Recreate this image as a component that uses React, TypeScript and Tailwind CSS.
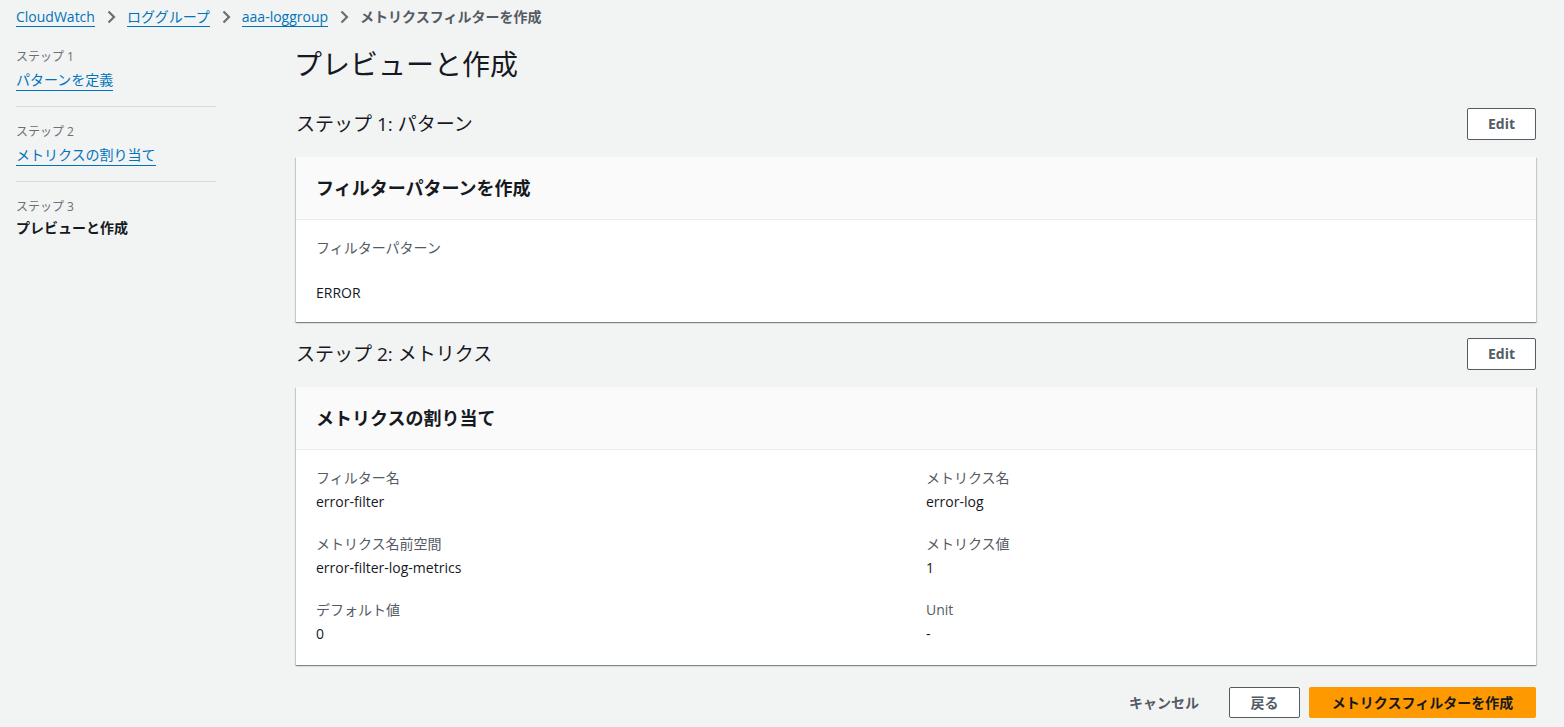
import React from 'react';

const font = 'font-["Open_Sans","Noto_Sans_CJK_JP",sans-serif]';

const Chevron = () => (
  <svg width="16" height="16" viewBox="0 0 16 16" className="mx-2 text-[#687078]">
    <path d="M5.5 2.5 L11 8 L5.5 13.5" fill="none" stroke="currentColor" strokeWidth="2.2" />
  </svg>
);

const Panel: React.FC<{ title: string; children: React.ReactNode }> = ({ title, children }) => (
  <div className="bg-white shadow-[0_1px_1px_0_rgba(0,28,36,0.3),1px_1px_1px_0_rgba(0,28,36,0.15),-1px_1px_1px_0_rgba(0,28,36,0.15)]">
    <div className="h-[63px] bg-[#fafafa] border-b border-[#eaeded] px-5 flex items-center">
      <h2 className="text-lg font-bold text-[#16191f]">{title}</h2>
    </div>
    {children}
  </div>
);

const SectionHead: React.FC<{ title: string }> = ({ title }) => (
  <div className="flex items-center justify-between h-[32px]">
    <h3 className="text-[19px] text-[#16191f]">{title}</h3>
    <button className="w-[69px] h-[32px] border border-[#545b64] rounded-[2px] bg-white text-sm font-bold text-[#545b64]">
      Edit
    </button>
  </div>
);

const Field: React.FC<{ label: string; value: string }> = ({ label, value }) => (
  <div className="h-[66px]">
    <div className="text-sm text-[#545b64] leading-[22px]">{label}</div>
    <div className="text-sm text-[#16191f] leading-[22px] mt-[2px]">{value}</div>
  </div>
);

export default function App() {
  const steps = [
    { n: 'ステップ 1', label: 'パターンを定義', link: true },
    { n: 'ステップ 2', label: 'メトリクスの割り当て', link: true },
    { n: 'ステップ 3', label: 'プレビューと作成', link: false },
  ];

  return (
    <div className={`${font} min-h-[727px] bg-[#f2f3f3] text-[#16191f]`}>
      {/* breadcrumbs */}
      <nav className="flex items-center h-[34px] px-4 text-sm">
        <a className="text-[#0073bb] border-b border-[#0073bb] leading-[18px]">CloudWatch</a>
        <Chevron />
        <a className="text-[#0073bb] border-b border-[#0073bb] leading-[18px]">ロググループ</a>
        <Chevron />
        <a className="text-[#0073bb] border-b border-[#0073bb] leading-[18px]">aaa-loggroup</a>
        <Chevron />
        <span className="text-[#545b64] font-semibold">メトリクスフィルターを作成</span>
      </nav>

      <div className="flex">
        {/* sidebar */}
        <aside className="w-[200px] ml-4 mt-[13px]">
          {steps.map((s, i) => (
            <div key={s.n} className={i < 2 ? 'border-b border-[#d5dbdb] pb-[15px] mb-[15px]' : ''}>
              <div className="text-xs text-[#687078] leading-5">{s.n}</div>
              {s.link ? (
                <a className="inline-block text-sm text-[#0073bb] border-b border-[#0073bb] leading-[20px] mt-[2px]">{s.label}</a>
              ) : (
                <div className="text-sm font-bold leading-[20px] mt-[1px]">{s.label}</div>
              )}
            </div>
          ))}
        </aside>

        {/* main */}
        <main className="ml-[80px] w-[1240px]">
          <h1 className="text-[28px] leading-[40px] mt-[10px] mb-[24px] -ml-[2px]">プレビューと作成</h1>

          <SectionHead title="ステップ 1: パターン" />
          <div className="mt-[17px]">
            <Panel title="フィルターパターンを作成">
              <div className="px-5 pt-[17px] pb-[18px]">
                <div className="text-sm text-[#545b64] leading-[22px]">フィルターパターン</div>
                <div className="text-sm leading-[22px] mt-[23px]">ERROR</div>
              </div>
            </Panel>
          </div>

          <div className="mt-[16px]">
            <SectionHead title="ステップ 2: メトリクス" />
          </div>
          <div className="mt-[17px]">
            <Panel title="メトリクスの割り当て">
              <div className="px-5 pt-[17px] grid grid-cols-2 gap-x-5">
                <div>
                  <Field label="フィルター名" value="error-filter" />
                  <Field label="メトリクス名前空間" value="error-filter-log-metrics" />
                  <Field label="デフォルト値" value="0" />
                </div>
                <div>
                  <Field label="メトリクス名" value="error-log" />
                  <Field label="メトリクス値" value="1" />
                  <Field label="Unit" value="-" />
                </div>
              </div>
            </Panel>
          </div>

          <div className="flex justify-end items-center mt-[22px] gap-2">
            <button className="h-[31px] px-5 text-sm font-bold text-[#545b64] mr-[2px]">キャンセル</button>
            <button className="h-[31px] w-[71px] border border-[#545b64] rounded-[2px] bg-white text-sm font-bold text-[#545b64]">
              戻る
            </button>
            <button className="h-[31px] w-[227px] rounded-[2px] bg-[#ff9900] text-sm font-bold text-[#16191f] ml-[1px]">
              メトリクスフィルターを作成
            </button>
          </div>
        </main>
      </div>
    </div>
  );
}
